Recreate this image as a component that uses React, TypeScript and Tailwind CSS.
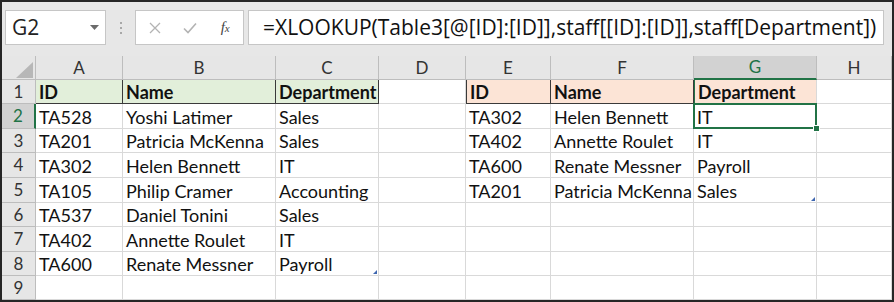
import React from "react";

const cols = [
  { key: "A", w: "w-[87px]" },
  { key: "B", w: "w-[153px]" },
  { key: "C", w: "w-[103px]" },
  { key: "D", w: "w-[87px]" },
  { key: "E", w: "w-[85px]" },
  { key: "F", w: "w-[143px]" },
  { key: "G", w: "w-[123px]" },
  { key: "H", w: "flex-1" },
];

const rowH = ["h-[24px]", "h-[25px]", "h-[24px]", "h-[25px]", "h-[25px]", "h-[24px]", "h-[25px]", "h-[24px]", "h-[24px]"];

const t1: string[][] = [
  ["ID", "Name", "Department"],
  ["TA528", "Yoshi Latimer", "Sales"],
  ["TA201", "Patricia McKenna", "Sales"],
  ["TA302", "Helen Bennett", "IT"],
  ["TA105", "Philip Cramer", "Accounting"],
  ["TA537", "Daniel Tonini", "Sales"],
  ["TA402", "Annette Roulet", "IT"],
  ["TA600", "Renate Messner", "Payroll"],
];
const t2: string[][] = [
  ["ID", "Name", "Department"],
  ["TA302", "Helen Bennett", "IT"],
  ["TA402", "Annette Roulet", "IT"],
  ["TA600", "Renate Messner", "Payroll"],
  ["TA201", "Patricia McKenna", "Sales"],
];

function cellText(r: number, c: number): string {
  if (c <= 2 && r < t1.length) return t1[r][c];
  if (c >= 4 && c <= 6 && r < t2.length) return t2[r][c - 4];
  return "";
}

function Corner() {
  return (
    <div className="relative w-[34px] h-full border-r border-b border-[#bdbdbd] bg-[#e6e6e6]">
      <svg className="absolute left-[14px] top-[6px]" width="17" height="16" viewBox="0 0 17 16">
        <polygon points="17,0 17,16 0,16" fill="#b7b7b7" />
      </svg>
    </div>
  );
}

function TableMark() {
  return (
    <svg className="absolute right-[1px] bottom-[1px]" width="4" height="4" viewBox="0 0 4 4">
      <polygon points="4,0 4,4 0,4" fill="#3f67b0" />
    </svg>
  );
}

export default function App() {
  return (
    <div className="w-[894px] h-[302px] border-2 border-[#262626] bg-[#e7e7e7] flex flex-col overflow-hidden" style={{ fontFamily: "Lato, 'Noto Sans', sans-serif" }}>
      {/* Formula bar */}
      <div className="h-[54px] flex items-start pt-[8px] pl-[3px] pr-[8px] gap-0">
        <div className="w-[101px] h-[35px] bg-white border border-[#c6c6c6] flex items-center pl-[6px] pr-[6px] justify-between">
          <span className="text-[21px] text-[#222]" style={{ fontFamily: "'Open Sans', sans-serif" }}>G2</span>
          <svg width="9" height="5" viewBox="0 0 9 5"><polygon points="0,0 9,0 4.5,5" fill="#6b6b6b" /></svg>
        </div>
        <div className="w-[29px] h-[35px] flex flex-col items-center justify-center gap-[3px]">
          <span className="w-[2px] h-[2px] bg-[#a8a8a8]" />
          <span className="w-[2px] h-[2px] bg-[#a8a8a8]" />
          <span className="w-[2px] h-[2px] bg-[#a8a8a8]" />
        </div>
        <div className="w-[109px] h-[35px] bg-white border border-[#c6c6c6] flex items-center">
          <div className="w-[36px] flex justify-center pl-[2px]">
            <svg width="12" height="12" viewBox="0 0 12 12"><path d="M1 1 L11 11 M11 1 L1 11" stroke="#b3b3b3" strokeWidth="1.3" fill="none" /></svg>
          </div>
          <div className="w-[36px] flex justify-center">
            <svg width="14" height="12" viewBox="0 0 14 12"><path d="M1 6.5 L5 10.5 L13 1.5" stroke="#b3b3b3" strokeWidth="1.6" fill="none" /></svg>
          </div>
          <div className="w-[36px] flex justify-center">
            <span className="text-[15px] italic text-[#444] leading-none" style={{ fontFamily: "'Liberation Serif', serif" }}>f<span className="text-[11px]">x</span></span>
          </div>
        </div>
        <div className="ml-[4px] flex-1 h-[35px] bg-white border border-[#c6c6c6] flex items-center pl-[14px] overflow-hidden whitespace-nowrap">
          <span className="text-[21px] text-[#111]" style={{ fontFamily: "'Open Sans', sans-serif" }}>
            =XLOOKUP(Table3[@[ID]:[ID]],staff[[ID]:[ID]],staff[Department])
          </span>
        </div>
      </div>

      {/* Column headers */}
      <div className="h-[24px] flex">
        <Corner />
        {cols.map((c) => {
          const sel = c.key === "G";
          return (
            <div
              key={c.key}
              className={`${c.w} h-full flex items-center justify-center text-[17px] border-r ${sel ? "bg-[#d2d2d2] text-[#217346] border-b-2 border-b-[#217346] border-r-[#bdbdbd]" : "bg-[#e6e6e6] text-[#333] border-b border-[#bdbdbd]"}`}
            >
              {c.key}
            </div>
          );
        })}
      </div>

      {/* Rows */}
      {rowH.map((h, r) => {
        const rowSel = r === 1;
        return (
          <div key={r} className={`${h} flex bg-white`}>
            <div
              className={`w-[34px] h-full flex items-center justify-center text-[17px] border-b border-[#bdbdbd] ${rowSel ? "bg-[#d2d2d2] text-[#217346] border-r-2 border-r-[#217346]" : "bg-[#e6e6e6] text-[#333] border-r border-r-[#bdbdbd]"}`}
            >
              {r + 1}
            </div>
            {cols.map((c, ci) => {
              const txt = cellText(r, ci);
              const isHead1 = r === 0 && ci <= 2;
              const isHead2 = r === 0 && ci >= 4 && ci <= 6;
              const isSel = r === 1 && ci === 6;
              const g1 = r === 0 && ci === 6;
              let cls = "border-r border-b border-[#d9d9d9]";
              if (isHead1) cls = "bg-[#e2efda] border-r border-b border-[#3a3a3a]";
              if (isHead2) cls = "bg-[#fce4d6] border-r border-b border-[#3a3a3a]" + (ci === 4 ? " border-l border-l-[#3a3a3a]" : "");
              if (g1) cls = "bg-[#fce4d6] border-b border-b-[#3a3a3a] border-l border-l-[#217346] border-r border-r-[#d9d9d9]";
              return (
                <div key={c.key} className={`${c.w} h-full relative flex items-center pl-[3px] whitespace-nowrap overflow-visible text-[18px] text-[#111] ${cls} ${isHead1 || isHead2 ? "font-bold" : ""} ${isSel ? "z-10" : ""}`}>
                  <span className="relative top-[1px]">{txt}</span>
                  {isSel && (
                    <>
                      <div className="absolute -left-[1px] -top-[1px] -right-[1px] -bottom-[1px] border-2 border-[#217346]" />
                      <div className="absolute -right-[4px] -bottom-[4px] w-[7px] h-[7px] bg-[#217346] border border-white" />
                    </>
                  )}
                  {((r === 7 && ci === 2) || (r === 4 && ci === 6)) && <TableMark />}
                </div>
              );
            })}
          </div>
        );
      })}
    </div>
  );
}
